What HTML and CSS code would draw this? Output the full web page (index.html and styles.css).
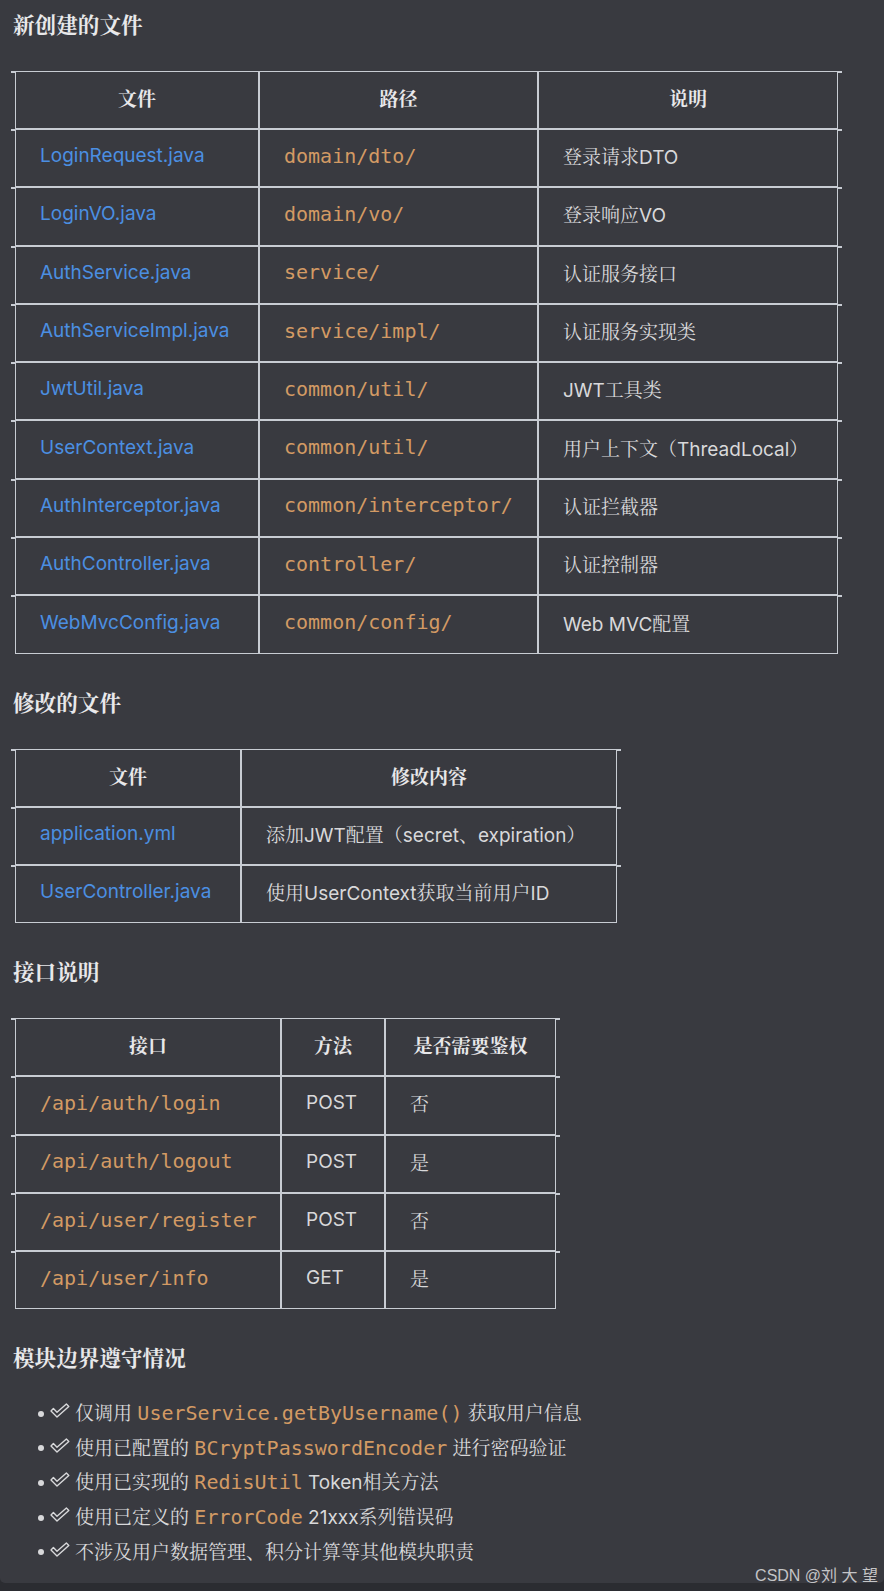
FILE: index.html
```html
<!DOCTYPE html>
<html lang="zh-CN">
<head>
<meta charset="utf-8">
<title>模块说明</title>
<link rel="stylesheet" href="styles.css">
</head>
<body>
<div class="page">
  <h2 class="sec">新创建的文件</h2>
  <table class="t t1">
    <colgroup><col class="w244"><col class="w279"><col class="w300"></colgroup>
    <thead><tr><th>文件</th><th>路径</th><th>说明</th></tr></thead>
    <tbody>
      <tr><td><a class="lnk">LoginRequest.java</a></td><td><code>domain/dto/</code></td><td>登录请求DTO</td></tr>
      <tr><td><a class="lnk">LoginVO.java</a></td><td><code>domain/vo/</code></td><td>登录响应VO</td></tr>
      <tr><td><a class="lnk">AuthService.java</a></td><td><code>service/</code></td><td>认证服务接口</td></tr>
      <tr><td><a class="lnk">AuthServiceImpl.java</a></td><td><code>service/impl/</code></td><td>认证服务实现类</td></tr>
      <tr><td><a class="lnk">JwtUtil.java</a></td><td><code>common/util/</code></td><td>JWT工具类</td></tr>
      <tr><td><a class="lnk">UserContext.java</a></td><td><code>common/util/</code></td><td>用户上下文（ThreadLocal）</td></tr>
      <tr><td><a class="lnk">AuthInterceptor.java</a></td><td><code>common/interceptor/</code></td><td>认证拦截器</td></tr>
      <tr><td><a class="lnk">AuthController.java</a></td><td><code>controller/</code></td><td>认证控制器</td></tr>
      <tr><td><a class="lnk">WebMvcConfig.java</a></td><td><code>common/config/</code></td><td>Web MVC配置</td></tr>
    </tbody>
  </table>

  <h2 class="sec">修改的文件</h2>
  <table class="t t2">
    <colgroup><col class="w226"><col class="w376"></colgroup>
    <thead><tr><th>文件</th><th>修改内容</th></tr></thead>
    <tbody>
      <tr><td><a class="lnk">application.yml</a></td><td>添加JWT配置（secret、expiration）</td></tr>
      <tr><td><a class="lnk">UserController.java</a></td><td>使用UserContext获取当前用户ID</td></tr>
    </tbody>
  </table>

  <h2 class="sec">接口说明</h2>
  <table class="t t3">
    <colgroup><col class="w266"><col class="w104"><col class="w171"></colgroup>
    <thead><tr><th>接口</th><th>方法</th><th>是否需要鉴权</th></tr></thead>
    <tbody>
      <tr><td><code>/api/auth/login</code></td><td>POST</td><td>否</td></tr>
      <tr><td><code>/api/auth/logout</code></td><td>POST</td><td>是</td></tr>
      <tr><td><code>/api/user/register</code></td><td>POST</td><td>否</td></tr>
      <tr><td><code>/api/user/info</code></td><td>GET</td><td>是</td></tr>
    </tbody>
  </table>

  <h2 class="sec">模块边界遵守情况</h2>
  <ul class="checks">
    <li><span class="dot"></span><svg class="ck" viewBox="0 0 20 15"><path d="M1 8 L3.4 5.6 L7 9.2 L16.4 1 L18.8 3.4 L7 14 Z"/></svg><span class="txt">仅调用 <code>UserService.getByUsername()</code> 获取用户信息</span></li>
    <li><span class="dot"></span><svg class="ck" viewBox="0 0 20 15"><path d="M1 8 L3.4 5.6 L7 9.2 L16.4 1 L18.8 3.4 L7 14 Z"/></svg><span class="txt">使用已配置的 <code>BCryptPasswordEncoder</code> 进行密码验证</span></li>
    <li><span class="dot"></span><svg class="ck" viewBox="0 0 20 15"><path d="M1 8 L3.4 5.6 L7 9.2 L16.4 1 L18.8 3.4 L7 14 Z"/></svg><span class="txt">使用已实现的 <code>RedisUtil</code> Token相关方法</span></li>
    <li><span class="dot"></span><svg class="ck" viewBox="0 0 20 15"><path d="M1 8 L3.4 5.6 L7 9.2 L16.4 1 L18.8 3.4 L7 14 Z"/></svg><span class="txt">使用已定义的 <code>ErrorCode</code> 21xxx系列错误码</span></li>
    <li><span class="dot"></span><svg class="ck" viewBox="0 0 20 15"><path d="M1 8 L3.4 5.6 L7 9.2 L16.4 1 L18.8 3.4 L7 14 Z"/></svg><span class="txt">不涉及用户数据管理、积分计算等其他模块职责</span></li>
  </ul>
  <div class="wm">CSDN @刘 大 望</div>
</div>
</body>
</html>
```

FILE: styles.css
```css
html, body {
  margin: 0;
  padding: 0;
}
body {
  background: #2b2c31;
  min-height: 1591px;
  font-family: Inter, "Noto Serif CJK SC", "Noto Sans CJK SC", sans-serif;
  color: #d8d8da;
}
.page {
  position: relative;
  background: #393a40;
  padding: 9px 13px 16px;
  border-radius: 0 0 5px 5px;
}
.sec {
  margin: 0;
  font-family: "Noto Serif CJK SC", "Noto Sans CJK SC", serif;
  font-weight: 700;
  font-size: 21.6px;
  line-height: 30px;
  color: #e8e8ea;
}
.t {
  margin: 32px 0 33px 2px;
  border-collapse: separate;
  border-spacing: 0;
  table-layout: fixed;
}
.t1 { width: 823px; }
.t2 { width: 602px; }
.t3 { width: 541px; }
.w244 { width: 244px; }
.w279 { width: 279px; }
.w300 { width: 300px; }
.w226 { width: 226px; }
.w376 { width: 376px; }
.w266 { width: 266px; }
.w104 { width: 104px; }
.w171 { width: 171px; }
.t th, .t td {
  box-sizing: border-box;
  border: 1px solid #c8ccd3;
  height: 58.3px;
  padding: 0 24px 5px;
  white-space: nowrap;
  vertical-align: middle;
  font-size: 19px;
}
.t th {
  height: 58px;
  text-align: center;
  font-family: "Noto Serif CJK SC", "Noto Sans CJK SC", serif;
  font-weight: 700;
  font-size: 19px;
  color: #e8e8ea;
}
.t td {
  text-align: left;
  font-weight: 400;
}
.t tr > :first-child,
.t tr > :last-child {
  position: relative;
}
.t tr > :first-child::before {
  content: "";
  position: absolute;
  left: -5px;
  top: -1px;
  width: 4px;
  height: 2px;
  background: #c8ccd3;
}
.t tr > :last-child::after {
  content: "";
  position: absolute;
  right: -5px;
  top: -1px;
  width: 4px;
  height: 2px;
  background: #c8ccd3;
}
.lnk {
  color: #4b8fe2;
  text-decoration: none;
}
.t code {
  font-family: "DejaVu Sans Mono", "Liberation Mono", monospace;
  font-size: 20px;
  color: #d39a64;
}
.checks {
  list-style: none;
  margin: 22px 0 0;
  padding: 0;
}
.checks li {
  display: flex;
  align-items: center;
  height: 34.6px;
  font-size: 19px;
  color: #d8d8da;
}
.dot {
  width: 6px;
  height: 6px;
  border-radius: 50%;
  background: #d8d8da;
  margin: 4px 0 0 25px;
  flex: none;
}
.ck {
  width: 20px;
  height: 15px;
  margin-left: 6px;
  margin-top: -2px;
  flex: none;
  fill: none;
  stroke: #d8d8da;
  stroke-width: 1.4;
  stroke-linejoin: round;
}
.txt {
  margin-left: 5px;
  white-space: nowrap;
}
.checks code {
  font-family: "DejaVu Sans Mono", "Liberation Mono", monospace;
  font-size: 20px;
  color: #d39a64;
}
.wm {
  position: absolute;
  right: 6px;
  bottom: -2px;
  font-family: "Liberation Sans", Arial, "Noto Sans CJK SC", sans-serif;
  font-size: 16px;
  line-height: 18px;
  color: #c4c4c6;
}
```
